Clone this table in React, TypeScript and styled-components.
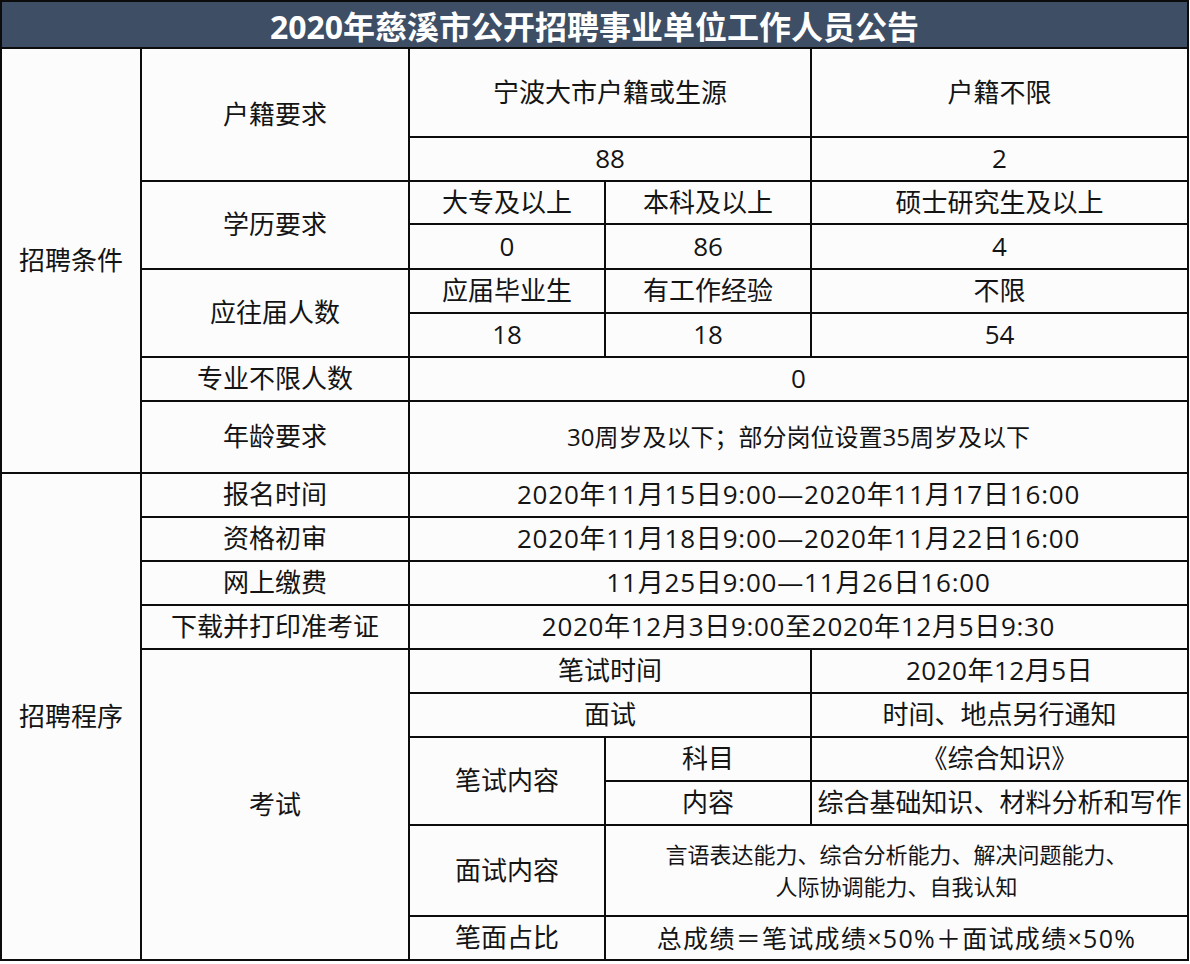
import React from "react";
import styled, { createGlobalStyle } from "styled-components";

const Global = createGlobalStyle`
  html, body { margin: 0; padding: 0; background: #ffffff; }
  body { font-family: "Open Sans", "Noto Sans CJK SC", sans-serif; }
`;

const Table = styled.div`
  display: grid;
  width: 1189px;
  box-sizing: border-box;
  grid-template-columns: 138px 266px 194px 204px 375px;
  grid-template-rows: 45px 87px 42px 41px 43px 42px 42px 42px 70px 42px 42px 42px 42px 42px 42px 42px 42px 89px 42px;
  gap: 2px;
  padding: 2px;
  background: #0c0c0c;
`;

const Title = styled.div`
  grid-column: 1 / 6;
  grid-row: 1;
  background: #3d4e65;
  color: #ffffff;
  font-family: "Open Sans", "Noto Sans CJK SC", sans-serif;
  font-weight: 700;
  font-size: 32px;
  display: flex;
  align-items: center;
  justify-content: center;
  padding-top: 1px;
`;

const Cell = styled.div<{ $col: string; $row: string; $size?: number; $lh?: number; $ls?: number }>`
  grid-column: ${(p) => p.$col};
  grid-row: ${(p) => p.$row};
  background: #fcfcfd;
  color: #141414;
  font-family: "Open Sans", "Noto Sans CJK SC", sans-serif;
  font-size: ${(p) => p.$size ?? 26}px;
  line-height: ${(p) => p.$lh ?? 1.2};
  letter-spacing: ${(p) => p.$ls ?? 0}px;
  display: flex;
  align-items: center;
  justify-content: center;
  text-align: center;
  white-space: pre-line;
`;

type C = { t: string; c: string; r: string; s?: number; lh?: number; ls?: number };

const cells: C[] = [
  { t: "招聘条件", c: "1", r: "2 / 10" },
  { t: "户籍要求", c: "2", r: "2 / 4" },
  { t: "宁波大市户籍或生源", c: "3 / 5", r: "2" },
  { t: "户籍不限", c: "5", r: "2" },
  { t: "88", c: "3 / 5", r: "3" },
  { t: "2", c: "5", r: "3" },
  { t: "学历要求", c: "2", r: "4 / 6" },
  { t: "大专及以上", c: "3", r: "4" },
  { t: "本科及以上", c: "4", r: "4" },
  { t: "硕士研究生及以上", c: "5", r: "4" },
  { t: "0", c: "3", r: "5" },
  { t: "86", c: "4", r: "5" },
  { t: "4", c: "5", r: "5" },
  { t: "应往届人数", c: "2", r: "6 / 8" },
  { t: "应届毕业生", c: "3", r: "6" },
  { t: "有工作经验", c: "4", r: "6" },
  { t: "不限", c: "5", r: "6" },
  { t: "18", c: "3", r: "7" },
  { t: "18", c: "4", r: "7" },
  { t: "54", c: "5", r: "7" },
  { t: "专业不限人数", c: "2", r: "8" },
  { t: "0", c: "3 / 6", r: "8" },
  { t: "年龄要求", c: "2", r: "9" },
  { t: "30周岁及以下；部分岗位设置35周岁及以下", c: "3 / 6", r: "9", s: 24 },
  { t: "招聘程序", c: "1", r: "10 / 20" },
  { t: "报名时间", c: "2", r: "10" },
  { t: "2020年11月15日9:00—2020年11月17日16:00", c: "3 / 6", r: "10", ls: 0.8 },
  { t: "资格初审", c: "2", r: "11" },
  { t: "2020年11月18日9:00—2020年11月22日16:00", c: "3 / 6", r: "11", ls: 0.8 },
  { t: "网上缴费", c: "2", r: "12" },
  { t: "11月25日9:00—11月26日16:00", c: "3 / 6", r: "12", ls: 0.8 },
  { t: "下载并打印准考证", c: "2", r: "13" },
  { t: "2020年12月3日9:00至2020年12月5日9:30", c: "3 / 6", r: "13", ls: 0.7 },
  { t: "考试", c: "2", r: "14 / 20" },
  { t: "笔试时间", c: "3 / 5", r: "14" },
  { t: "2020年12月5日", c: "5", r: "14", ls: 0.5 },
  { t: "面试", c: "3 / 5", r: "15" },
  { t: "时间、地点另行通知", c: "5", r: "15" },
  { t: "笔试内容", c: "3", r: "16 / 18" },
  { t: "科目", c: "4", r: "16" },
  { t: "《综合知识》", c: "5", r: "16" },
  { t: "内容", c: "4", r: "17" },
  { t: "综合基础知识、材料分析和写作", c: "5", r: "17" },
  { t: "面试内容", c: "3", r: "18" },
  {
    t: "言语表达能力、综合分析能力、解决问题能力、\n人际协调能力、自我认知",
    c: "4 / 6",
    r: "18",
    s: 22,
    lh: 1.45,
  },
  { t: "笔面占比", c: "3", r: "19" },
  { t: "总成绩＝笔试成绩×50%＋面试成绩×50%", c: "4 / 6", r: "19", s: 25, ls: 1.3 },
];

export default function App() {
  return (
    <>
      <Global />
      <Table>
        <Title>2020年慈溪市公开招聘事业单位工作人员公告</Title>
        {cells.map((x, i) => (
          <Cell key={i} $col={x.c} $row={x.r} $size={x.s} $lh={x.lh} $ls={x.ls}>
            {x.t}
          </Cell>
        ))}
      </Table>
    </>
  );
}
